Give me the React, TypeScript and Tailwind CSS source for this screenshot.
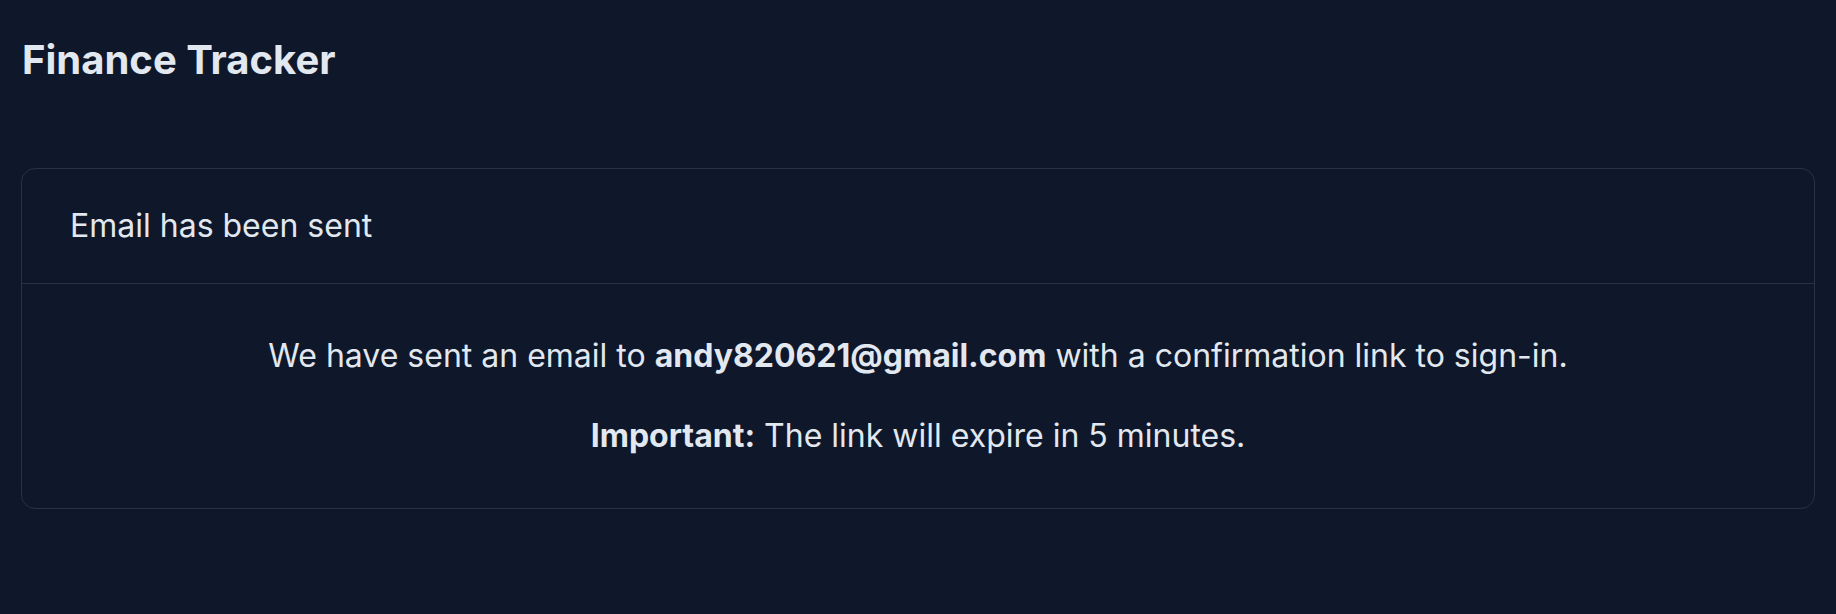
export default function App() {
  return (
    <div className="min-h-screen bg-[#0f172a] px-[21px] pt-9 font-['Inter',sans-serif] text-[#e2e8f0]">
      <h1 className="pl-px text-[40px] font-bold leading-[48px]">Finance Tracker</h1>

      <div className="mt-[84px] rounded-[14px] border border-[#283243]">
        <div className="border-b border-[#283243] px-12 py-[37px] text-[32px] leading-[40px]">
          Email has been sent
        </div>
        <div className="flex flex-col gap-10 py-[52px] text-center text-[32px] leading-[40px]">
          <p>
            We have sent an email to <strong className="font-bold">andy820621@gmail.com</strong> with a
            confirmation link to sign-in.
          </p>
          <p>
            <strong className="font-bold">Important:</strong> The link will expire in 5 minutes.
          </p>
        </div>
      </div>
    </div>
  );
}
